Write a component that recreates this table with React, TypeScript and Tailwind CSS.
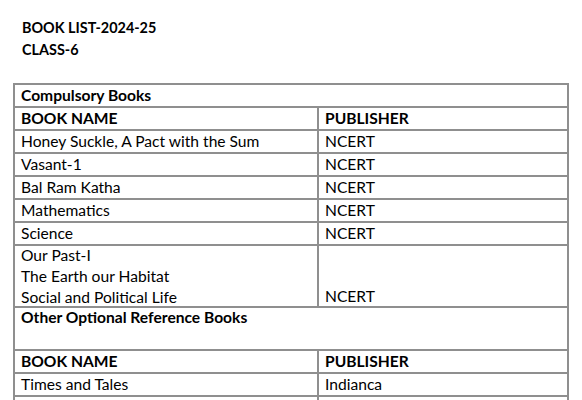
import React from "react";

const rows: [string, string][] = [
  ["Honey Suckle, A Pact with the Sum", "NCERT"],
  ["Vasant-1", "NCERT"],
  ["Bal Ram Katha", "NCERT"],
  ["Mathematics", "NCERT"],
  ["Science", "NCERT"],
];

const cell = "border-2 border-[#8f8f8f] px-[6px] align-middle leading-[19px]";

export default function App() {
  return (
    <div
      className="w-[582px] h-[400px] overflow-hidden bg-white text-black"
      style={{ fontFamily: "Lato, 'Open Sans', sans-serif" }}
    >
      <div className="pt-[17px] pl-[22px] text-[14.4px] font-bold leading-[22px]">
        <div>BOOK LIST-2024-25</div>
        <div>CLASS-6</div>
      </div>
      <table className="mt-[22px] ml-[13px] border-collapse table-fixed w-[554px] text-[15.6px]">
        <colgroup>
          <col className="w-[304px]" />
          <col className="w-[250px]" />
        </colgroup>
        <tbody>
          <tr className="h-[23px]">
            <td colSpan={2} className={cell + " font-bold"}>Compulsory Books</td>
          </tr>
          <tr className="h-[23px]">
            <td className={cell + " font-bold"}>BOOK NAME</td>
            <td className={cell + " font-bold"}>PUBLISHER</td>
          </tr>
          {rows.map(([a, b]) => (
            <tr key={a} className="h-[23px]">
              <td className={cell}>{a}</td>
              <td className={cell}>{b}</td>
            </tr>
          ))}
          <tr className="h-[62px]">
            <td className={cell}>
              <div className="h-[60px] -mt-[2px] leading-[21px]">
                <div>Our Past-I</div>
                <div>The Earth our Habitat</div>
                <div>Social and Political Life</div>
              </div>
            </td>
            <td className={cell + " !align-bottom"}>NCERT</td>
          </tr>
          <tr className="h-[43px]">
            <td colSpan={2} className={cell + " font-bold !align-top"}>Other Optional Reference Books</td>
          </tr>
          <tr className="h-[23px]">
            <td className={cell + " font-bold"}>BOOK NAME</td>
            <td className={cell + " font-bold"}>PUBLISHER</td>
          </tr>
          <tr className="h-[23px]">
            <td className={cell}>Times and Tales</td>
            <td className={cell}>Indianca</td>
          </tr>
          <tr className="h-[23px]">
            <td className={cell}>&nbsp;</td>
            <td className={cell}>&nbsp;</td>
          </tr>
        </tbody>
      </table>
    </div>
  );
}
